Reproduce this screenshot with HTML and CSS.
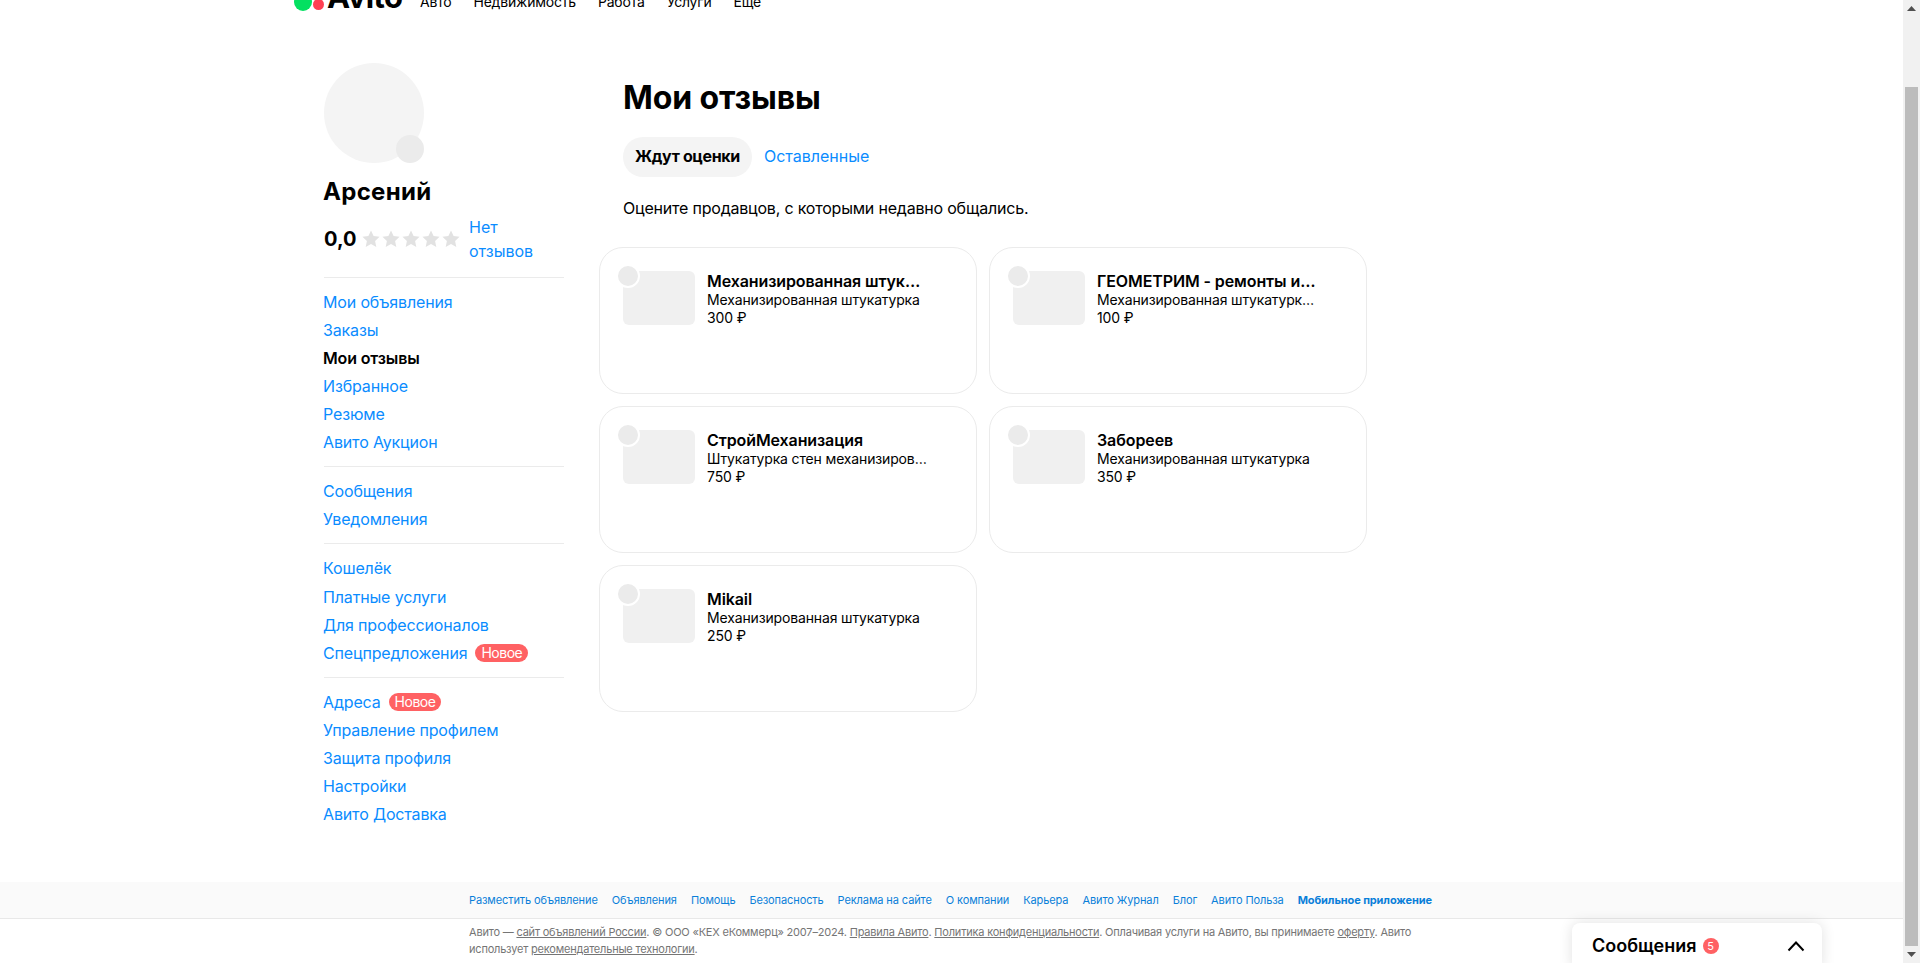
FILE: index.html
```html
<!DOCTYPE html>
<html lang="ru">
<head>
<meta charset="utf-8">
<title>Мои отзывы</title>
<link rel="stylesheet" href="styles.css">
</head>
<body>
<div class="app">
  <div class="page">
    <header class="topbar">
      <div class="logo">
        <span class="dot-green"></span><span class="dot-red"></span><span class="logo-text">Avito</span>
      </div>
      <nav class="topnav">
        <a>Авто</a><a>Недвижимость</a><a>Работа</a><a>Услуги</a><a>Ещё</a>
      </nav>
    </header>
    <main class="layout">
      <aside class="sidebar">
        <div class="avatar"><span class="avatar-badge"></span></div>
        <h2 class="username">Арсений</h2>
        <div class="rating">
          <span class="score">0,0</span>
          <span class="stars">
            <svg viewBox="0 0 20 20"><path d="M10 1.5l2.6 5.6 6 .7-4.5 4.1 1.2 6L10 15l-5.3 2.9 1.2-6L1.400 7.800l6-.7z"/></svg>
            <svg viewBox="0 0 20 20"><path d="M10 1.5l2.6 5.6 6 .7-4.5 4.1 1.2 6L10 15l-5.3 2.9 1.2-6L1.400 7.800l6-.7z"/></svg>
            <svg viewBox="0 0 20 20"><path d="M10 1.5l2.6 5.6 6 .7-4.5 4.1 1.2 6L10 15l-5.3 2.9 1.2-6L1.400 7.800l6-.7z"/></svg>
            <svg viewBox="0 0 20 20"><path d="M10 1.5l2.6 5.6 6 .7-4.5 4.1 1.2 6L10 15l-5.3 2.9 1.2-6L1.400 7.800l6-.7z"/></svg>
            <svg viewBox="0 0 20 20"><path d="M10 1.5l2.6 5.6 6 .7-4.5 4.1 1.2 6L10 15l-5.3 2.9 1.2-6L1.400 7.800l6-.7z"/></svg>
          </span>
          <a class="reviews-link">Нет отзывов</a>
        </div>
        <ul class="menu">
          <li><a>Мои объявления</a></li>
          <li><a>Заказы</a></li>
          <li class="active"><a>Мои отзывы</a></li>
          <li><a>Избранное</a></li>
          <li><a>Резюме</a></li>
          <li><a>Авито Аукцион</a></li>
        </ul>
        <ul class="menu">
          <li><a>Сообщения</a></li>
          <li><a>Уведомления</a></li>
        </ul>
        <ul class="menu menu-wallet">
          <li><a>Кошелёк</a></li>
          <li><a>Платные услуги</a></li>
          <li><a>Для профессионалов</a></li>
          <li><a>Спецпредложения</a><span class="tag">Новое</span></li>
        </ul>
        <ul class="menu">
          <li><a>Адреса</a><span class="tag">Новое</span></li>
          <li><a>Управление профилем</a></li>
          <li><a>Защита профиля</a></li>
          <li><a>Настройки</a></li>
          <li><a>Авито Доставка</a></li>
        </ul>
      </aside>
      <section class="content">
        <h1 class="title">Мои отзывы</h1>
        <div class="tabs">
          <span class="tab tab-active">Ждут оценки</span>
          <a class="tab">Оставленные</a>
        </div>
        <p class="lead">Оцените продавцов, с которыми недавно общались.</p>
        <div class="cards">
          <article class="card">
            <div class="thumb"><span class="thumb-dot"></span></div>
            <div class="card-text">
              <div class="card-title">Механизированная штукатурка</div>
              <div class="card-sub">Механизированная штукатурка</div>
              <div class="card-price">300 ₽</div>
            </div>
          </article>
          <article class="card">
            <div class="thumb"><span class="thumb-dot"></span></div>
            <div class="card-text">
              <div class="card-title">ГЕОМЕТРИМ - ремонты и отделка</div>
              <div class="card-sub">Механизированная штукатурка стен</div>
              <div class="card-price">100 ₽</div>
            </div>
          </article>
          <article class="card">
            <div class="thumb"><span class="thumb-dot"></span></div>
            <div class="card-text">
              <div class="card-title">СтройМеханизация</div>
              <div class="card-sub">Штукатурка стен механизированная</div>
              <div class="card-price">750 ₽</div>
            </div>
          </article>
          <article class="card">
            <div class="thumb"><span class="thumb-dot"></span></div>
            <div class="card-text">
              <div class="card-title">Забореев</div>
              <div class="card-sub">Механизированная штукатурка</div>
              <div class="card-price">350 ₽</div>
            </div>
          </article>
          <article class="card">
            <div class="thumb"><span class="thumb-dot"></span></div>
            <div class="card-text">
              <div class="card-title">Mikail</div>
              <div class="card-sub">Механизированная штукатурка</div>
              <div class="card-price">250 ₽</div>
            </div>
          </article>
        </div>
      </section>
    </main>
    <footer class="footer">
      <div class="footer-links">
        <a>Разместить объявление</a><a>Объявления</a><a>Помощь</a><a>Безопасность</a><a>Реклама на сайте</a><a>О компании</a><a>Карьера</a><a>Авито Журнал</a><a>Блог</a><a>Авито Польза</a><a class="strong">Мобильное приложение</a>
      </div>
      <p class="legal">Авито — <a>сайт объявлений России</a>. © ООО «КЕХ еКоммерц» 2007–2024. <a>Правила Авито</a>. <a>Политика конфиденциальности</a>. Оплачивая услуги на Авито, вы принимаете <a>оферту</a>. Авито использует <a>рекомендательные технологии</a>.</p>
    </footer>
    <div class="messenger">
      <span class="messenger-label">Сообщения</span>
      <span class="messenger-count">5</span>
      <svg class="messenger-chevron" viewBox="0 0 20 20"><path d="M2.500 14.500l7.500-8 7.500 8" fill="none" stroke="#000" stroke-width="2"/></svg>
    </div>
  </div>
  <div class="scrollbar">
    <svg class="arrow" viewBox="0 0 17 17"><path d="M8.500 6L13 11H4z"/></svg>
    <div class="thumb-track"><div class="scroll-thumb"></div></div>
    <svg class="arrow" viewBox="0 0 17 17"><path d="M8.500 11L4 6h9z"/></svg>
  </div>
</div>
</body>
</html>
```
FILE: styles.css
```css
* { box-sizing: border-box; }
html, body { margin: 0; height: 100%; overflow: hidden; }
body { font-family: Inter, "Noto Sans", sans-serif; color: #000; background: #fff; font-size: 16px; }
a { color: #0a8cff; text-decoration: none; }
ul { list-style: none; margin: 0; padding: 0; }
h1, h2, p { margin: 0; }

.app { display: flex; height: 963px; }
.page { flex: 1; min-width: 0; display: flex; flex-direction: column; position: relative; }

.topbar { height: 12px; padding-left: 294px; display: flex; align-items: flex-end; overflow: hidden; flex: none; }
.logo { display: flex; align-items: flex-end; width: 126px; flex: none; height: 30px; }
.dot-green { width: 18px; height: 18px; border-radius: 50%; background: #04e061; flex: none; margin-bottom: 1px; }
.dot-red { width: 11px; height: 11px; border-radius: 50%; background: #ff4053; margin-left: 1px; margin-bottom: 2px; flex: none; }
.logo-text { font-size: 31px; font-weight: 700; line-height: 30px; margin-left: 3px; margin-bottom: 0; letter-spacing: -0.5px; }
.topnav { display: flex; gap: 22px; font-size: 14px; line-height: 20px; letter-spacing: -0.2px; flex: none; }
.topnav a { color: #000; }

.layout { display: flex; padding: 51px 0 0 324px; gap: 59px; flex: 1; min-height: 0; }
.sidebar { width: 240px; flex: none; }
.avatar { width: 100px; height: 100px; border-radius: 50%; background: #f4f4f4; position: relative; }
.avatar-badge { position: absolute; right: 0; bottom: 0; width: 28px; height: 28px; border-radius: 50%; background: #ebebeb; }
.username { font-size: 24px; line-height: 32px; font-weight: 700; margin: 13px 0 0 -1px; letter-spacing: 0.3px; }
.rating { display: flex; align-items: center; margin-top: 7px; padding-bottom: 14px; }
.score { font-size: 20px; font-weight: 700; line-height: 24px; width: 37px; flex: none; }
.stars { display: flex; width: 108px; flex: none; }
.stars svg { width: 20px; height: 20px; fill: #e2e2e2; flex: none; }
.reviews-link { width: 70px; line-height: 24px; font-size: 16px; }

.menu { border-top: 1px solid #ebebeb; padding: 10px 0; letter-spacing: -0.15px; }
.menu li { height: 28px; line-height: 28px; display: flex; align-items: center; white-space: nowrap; font-size: 16px; margin-left: -1px; }
.menu-wallet li:first-child { height: 29px; padding-bottom: 1px; }
.menu li.active a { color: #000; font-weight: 600; }
.tag { background: #ff6163; color: #fff; font-size: 14px; line-height: 18px; height: 18px; padding: 0 6px; border-radius: 9px; margin-left: 8px; letter-spacing: -0.5px; }

.content { flex: 1; min-width: 0; padding-top: 15px; }
.title { font-size: 32px; line-height: 40px; font-weight: 700; letter-spacing: -0.1px; }
.tabs { display: flex; align-items: center; margin-top: 19px; gap: 12px; }
.tab { font-size: 16px; line-height: 24px; padding: 7px 0 9px; }
.tab-active { background: #f4f4f4; font-weight: 700; padding: 7px 12px 9px; border-radius: 20px; height: 40px; letter-spacing: -0.35px; }
.lead { margin-top: 19px; line-height: 24px; letter-spacing: -0.2px; }
.cards { display: grid; grid-template-columns: 378px 378px; grid-auto-rows: 147px; gap: 12px; margin: 27px 0 0 -24px; }
.card { border: 1px solid #ebebeb; border-radius: 24px; padding: 23px; display: flex; gap: 12px; min-width: 0; }
.thumb { width: 72px; height: 54px; background: #f0f0f0; border-radius: 6px; position: relative; flex: none; }
.thumb-dot { position: absolute; left: -7px; top: -7px; width: 24px; height: 24px; border-radius: 50%; background: #ebebeb; border: 2px solid #fff; }
.card-text { width: 221px; flex: none; }
.card-title, .card-sub { white-space: nowrap; overflow: hidden; text-overflow: ellipsis; }
.card-title { font-size: 16px; line-height: 20px; font-weight: 600; letter-spacing: -0.1px; }
.card-sub, .card-price { font-size: 14px; line-height: 18px; letter-spacing: -0.15px; }

.footer { flex: none; height: 81px; background: linear-gradient(#fafafa 0 36px, #e8e8e8 36px 37px, #fff 37px); }
.footer-links { display: flex; gap: 14px; height: 36px; align-items: center; padding-left: 469px; font-size: 11px; letter-spacing: -0.1px; }
.footer-links a { color: #0a7fd9; white-space: nowrap; }
.footer-links .strong { font-weight: 700; }
.legal { margin: 6px 0 0 469px; width: 950px; font-size: 11px; line-height: 17px; color: #757575; letter-spacing: -0.2px; }
.legal a { color: #757575; text-decoration: underline; }

.messenger { position: absolute; left: 1572px; top: 923px; width: 250px; height: 45px; background: #fff; border-radius: 8px 8px 0 0; box-shadow: 0 0 14px rgba(0,0,0,.12); display: flex; align-items: center; padding: 0 16px 0 20px; }
.messenger-label { font-size: 18px; font-weight: 600; }
.messenger-count { width: 16px; height: 16px; border-radius: 50%; background: #ff6163; color: #fff; font-size: 11px; line-height: 16px; text-align: center; margin-left: 6px; }
.messenger-chevron { width: 20px; height: 20px; margin-left: auto; }

.scrollbar { width: 17px; flex: none; background: #f1f1f1; display: flex; flex-direction: column; }
.arrow { width: 17px; height: 17px; fill: #505050; flex: none; }
.thumb-track { flex: 1; padding-top: 70px; display: flex; }
.scroll-thumb { width: 13px; margin: 0 2px; background: #bcbcbc; flex: 1; }
```
